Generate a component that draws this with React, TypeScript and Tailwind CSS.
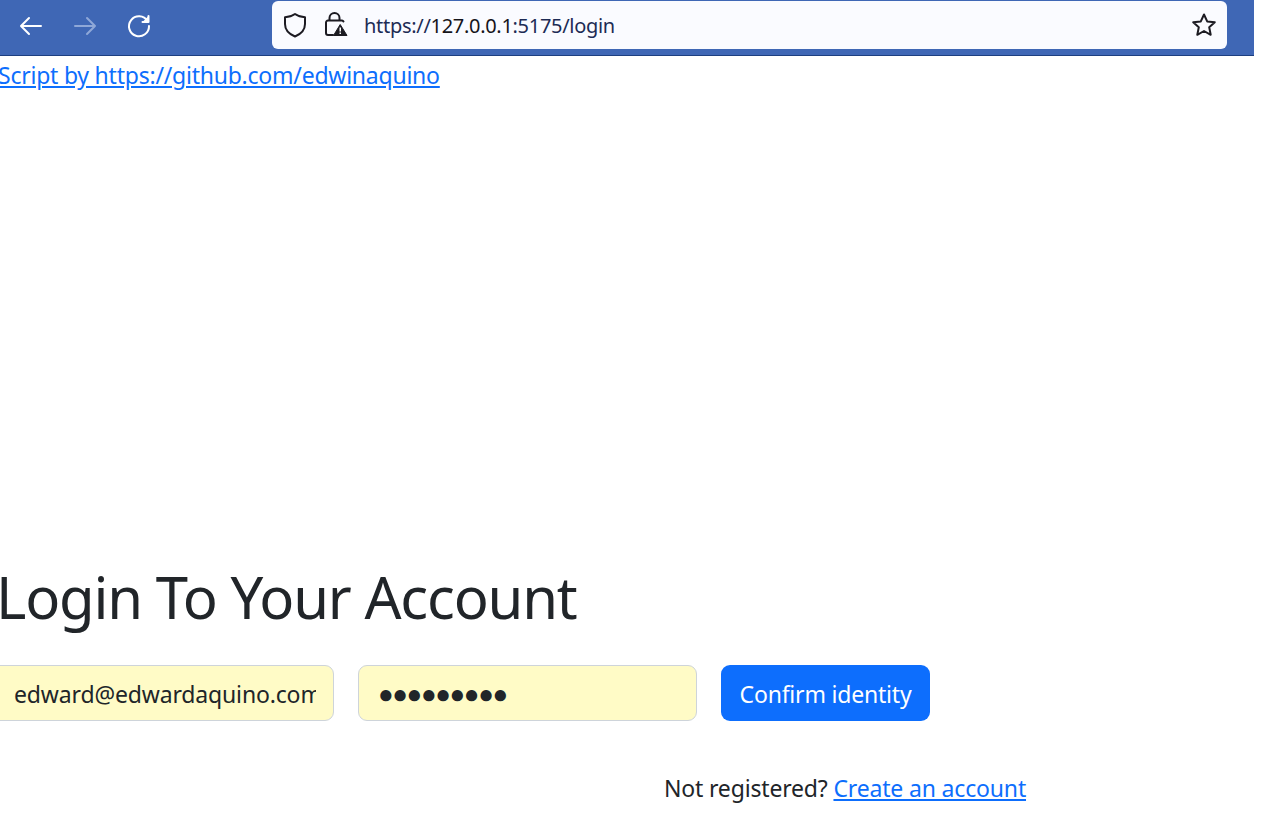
import React from "react";

function BrowserBar() {
  return (
    <div className="flex h-[56px] w-[1254px] items-start border-b border-[#1d3f80] bg-[#3f67b5]">
      <div className="flex h-[52px] w-[272px] items-center pl-[18px]">
        <svg width="26" height="26" viewBox="0 0 26 26" fill="none" stroke="#fff" strokeWidth="2" strokeLinecap="round" strokeLinejoin="round">
          <path d="M3 13H23M11 5L3 13L11 21" />
        </svg>
        <svg className="ml-[28px]" width="26" height="26" viewBox="0 0 26 26" fill="none" stroke="#8fa8d8" strokeWidth="2" strokeLinecap="round" strokeLinejoin="round">
          <path d="M3 13H23M15 5L23 13L15 21" />
        </svg>
        <svg className="ml-[28px]" width="26" height="26" viewBox="0 0 26 26" fill="none" stroke="#fff" strokeWidth="2" strokeLinecap="round" strokeLinejoin="round">
          <path d="M21.5 8A10 10 0 1 0 23 13" />
          <path d="M22.5 3V9H16.5" fill="#fff" />
        </svg>
      </div>
      <div className="mt-px flex h-[48px] w-[955px] items-center rounded-[6px] bg-[#fafbff] pl-[11px] pr-[10px]">
        <svg width="24" height="26" viewBox="0 0 24 26" fill="none" stroke="#1c1b22" strokeWidth="2" strokeLinejoin="round">
          <path d="M12 2C15 4.2 18 5 22 5.2V12C22 18 18 22 12 24.5C6 22 2 18 2 12V5.2C6 5 9 4.2 12 2Z" />
        </svg>
        <svg className="ml-[18px]" width="24" height="26" viewBox="0 0 24 26" fill="none">
          <path d="M4.5 9V6A5 5 0 0 1 14.5 6V9" stroke="#1c1b22" strokeWidth="2" />
          <path d="M8 23H3A2 2 0 0 1 1 21V10.5A2 2 0 0 1 3 8.5H17A2 2 0 0 1 18.5 9.5" stroke="#1c1b22" strokeWidth="2" strokeLinecap="round" />
          <path d="M15.2 12.5L22 23.5H8.5Z" fill="#1c1b22" stroke="#1c1b22" strokeLinejoin="round" />
          <rect x="14.5" y="15.5" width="1.5" height="4" fill="#fff" />
          <rect x="14.5" y="20.5" width="1.5" height="1.5" fill="#fff" />
        </svg>
        <div className="ml-[15px] mt-[2px] flex-1 text-[20px] leading-[28px] tracking-[-0.3px] text-[#1d2b55]">
          https://<span className="text-[#15141a]">127.0.0.1</span>:5175/login
        </div>
        <svg width="26" height="26" viewBox="0 0 26 26" fill="none" stroke="#1c1b22" strokeWidth="2" strokeLinejoin="round">
          <path d="M13 2.5L16.2 9.4L23.8 10.2L18.2 15.3L19.7 22.8L13 19L6.3 22.8L7.8 15.3L2.2 10.2L9.8 9.4Z" />
        </svg>
      </div>
    </div>
  );
}

export default function App() {
  return (
    <div className="h-[823px] w-[1273px] overflow-hidden bg-white font-['Noto_Sans',sans-serif] text-[#212529]">
      <BrowserBar />
      <a href="#" className="-ml-[2px] block w-fit text-[23px] leading-[39px] tracking-[-0.23px] text-[#0d6efd] underline">
        Script by https://github.com/edwinaquino
      </a>
      <h1 className="-ml-[4px] mt-[466px] text-[58px] leading-[72px] tracking-[-1.2px]">Login To Your Account</h1>
      <form className="-ml-[12px] mt-[32px] flex items-start gap-[24px]">
        <div className="flex h-[56px] w-[346px] items-center overflow-hidden rounded-[9px] border border-[#ced4da] bg-[#fffbc6] pl-[25px] pr-[17px] pt-[2px] text-[23px] tracking-[-0.15px] whitespace-nowrap">
          <span className="block w-full overflow-hidden">edward@edwardaquino.com</span>
        </div>
        <div className="flex h-[56px] w-[339px] items-center rounded-[9px] border border-[#ced4da] bg-[#fffbc6] pl-[19px] text-[26px] tracking-[-1.4px]">
          ●●●●●●●●●
        </div>
        <button type="button" className="h-[56px] w-[209px] rounded-[9px] bg-[#0d6efd] pt-[2px] text-[23px] tracking-[-0.2px] text-white">
          Confirm identity
        </button>
      </form>
      <p className="ml-[664px] mt-[49px] text-[23px] leading-[36px] tracking-[-0.17px]">
        Not registered? <a href="#" className="text-[#0d6efd] underline">Create an account</a>
      </p>
    </div>
  );
}
